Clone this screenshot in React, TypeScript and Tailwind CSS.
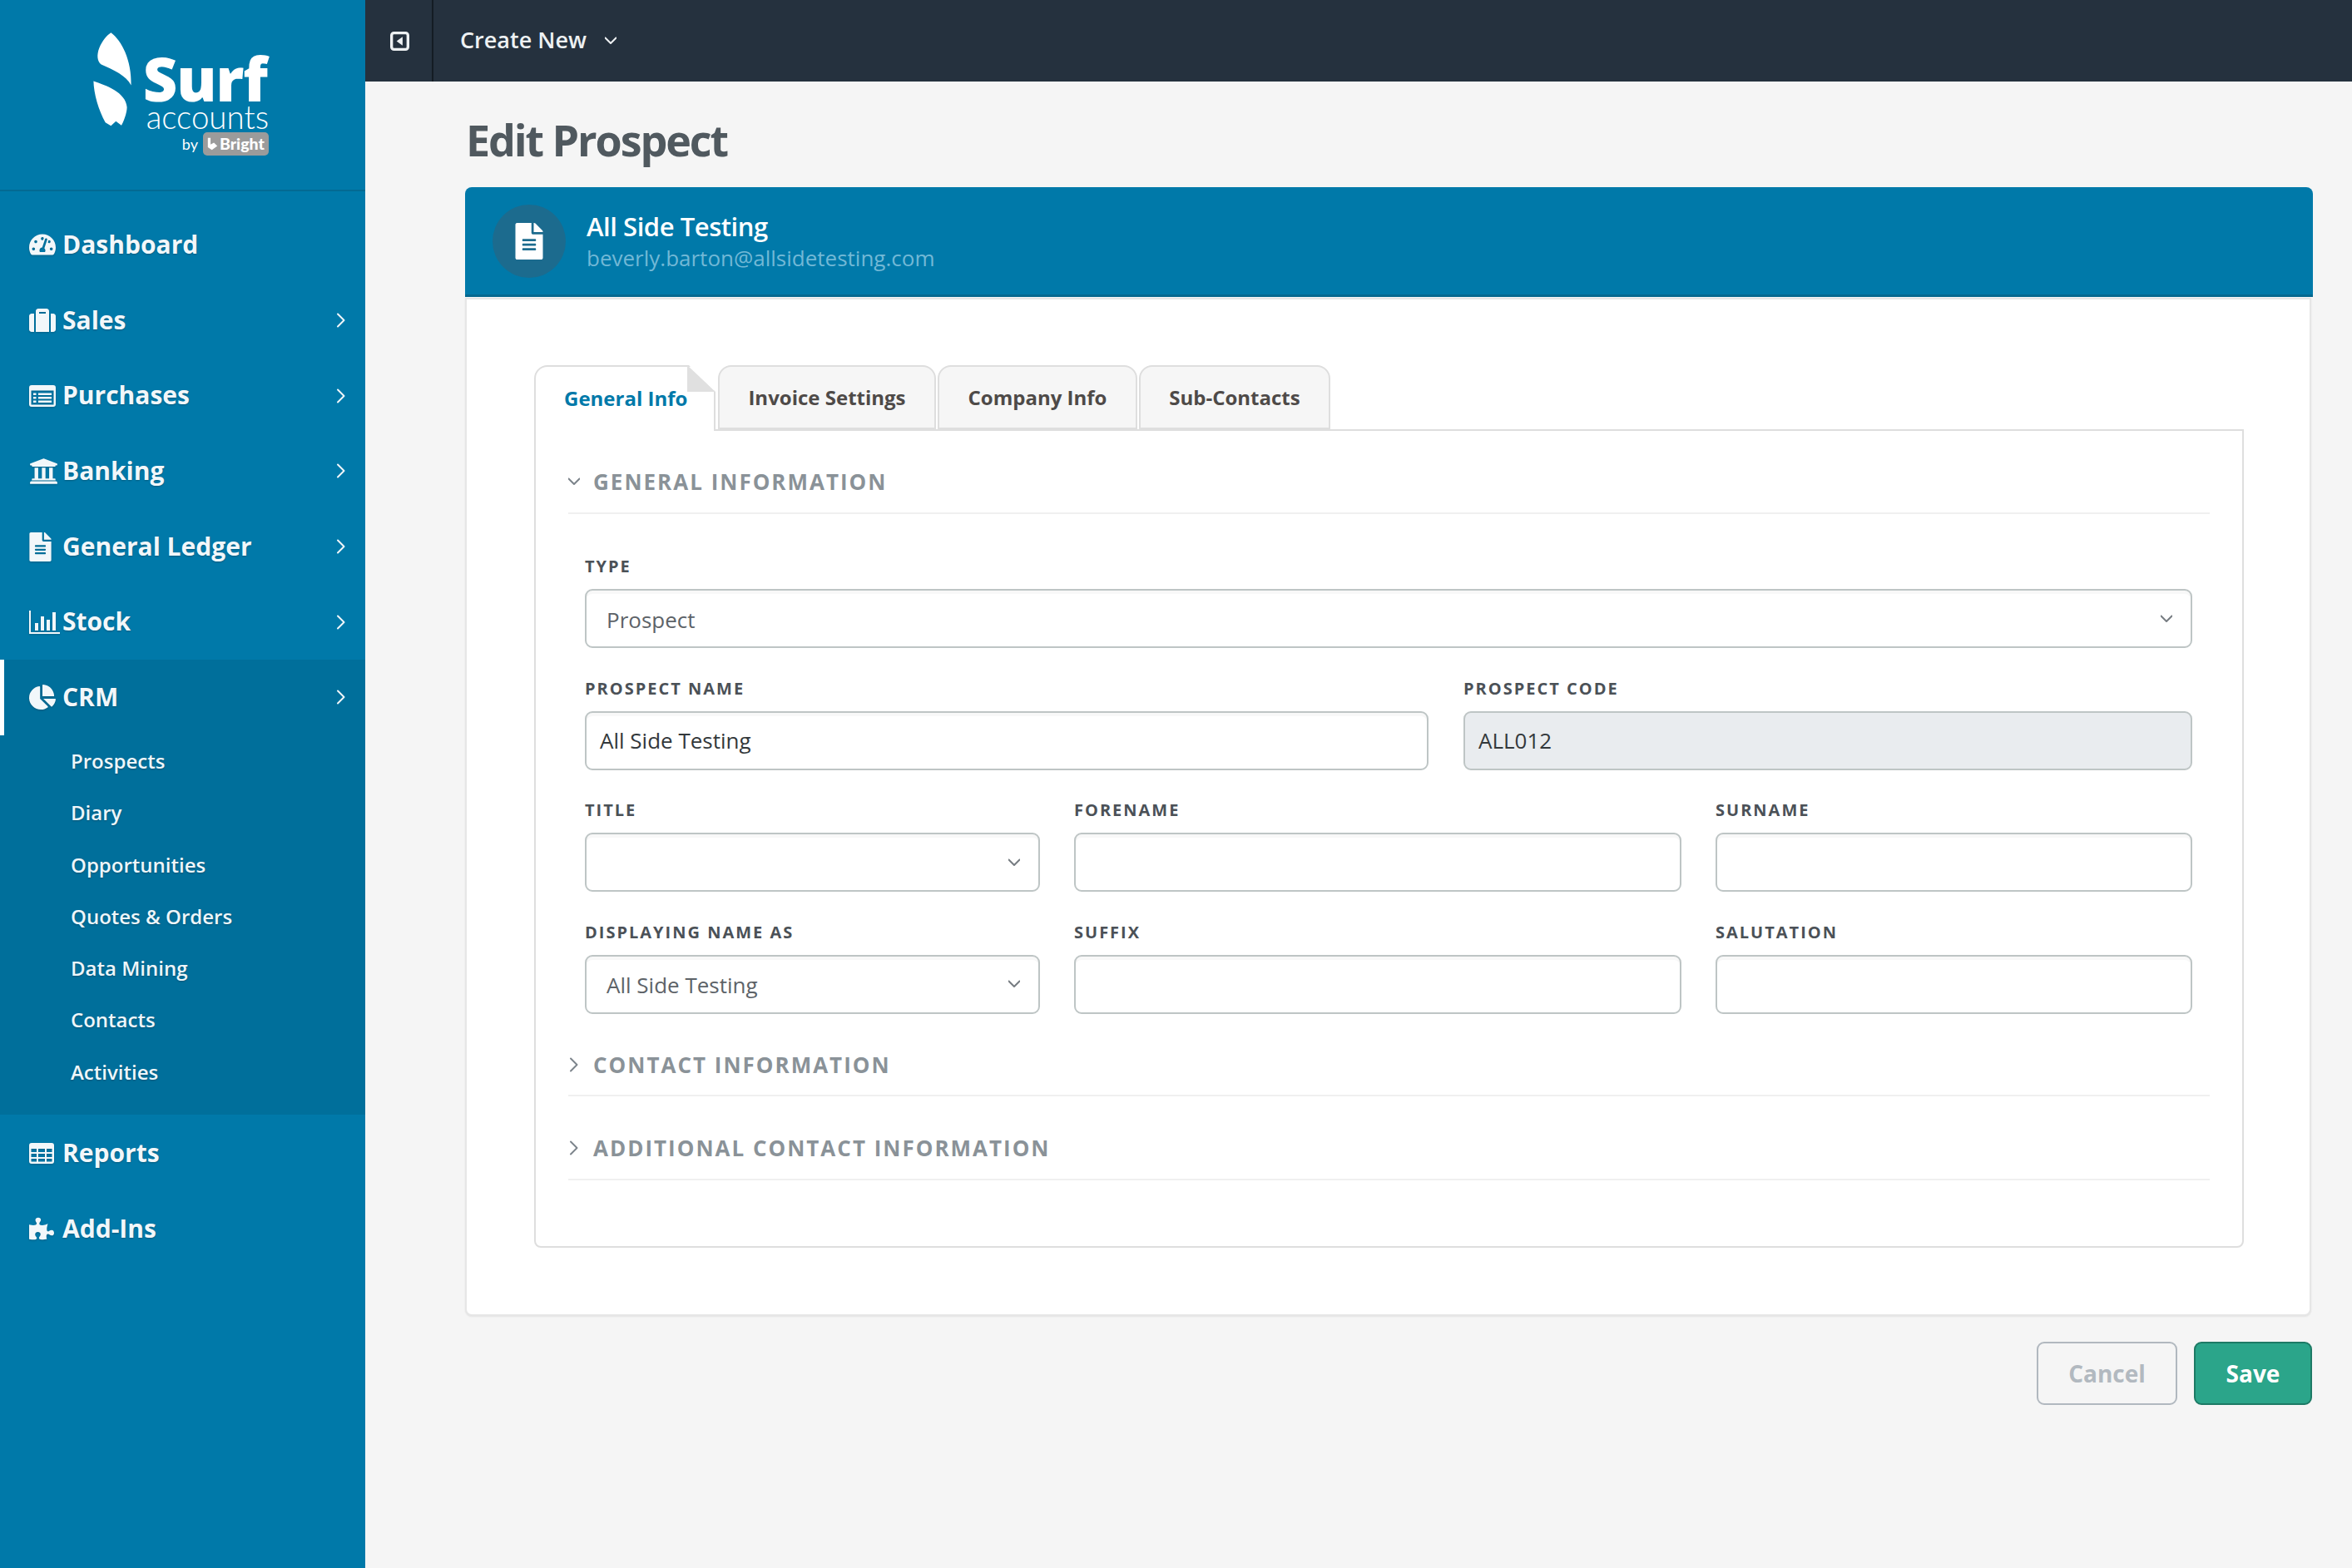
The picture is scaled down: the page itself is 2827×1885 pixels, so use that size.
import React from "react";
import {
  FaTachometerAlt,
  FaSuitcase,
  FaUniversity,
  FaFileAlt,
  FaChartPie,
  FaPuzzlePiece,
} from "react-icons/fa";

const Chev = ({ dir, className }: { dir: "right" | "down"; className: string }) => (
  <svg viewBox="0 0 14 18" className={className} fill="none" stroke="currentColor" strokeWidth="2" strokeLinecap="round" strokeLinejoin="round">
    {dir === "right" ? <path d="M3 1.5 10.5 9 3 16.5" /> : <path d="M0.5 5.5 7 12l6.5-6.5" />}
  </svg>
);

const StockIcon = ({ className }: { className: string }) => (
  <svg viewBox="0 0 37 28" className={className} fill="currentColor">
    <rect x="0" y="0" width="2" height="28" />
    <rect x="0" y="26" width="37" height="2" />
    <rect x="7" y="15" width="4" height="9" />
    <rect x="14" y="7" width="4" height="17" />
    <rect x="21" y="11" width="4" height="13" />
    <rect x="28" y="2" width="4" height="22" />
  </svg>
);

const TableIcon = ({ className }: { className: string }) => (
  <svg viewBox="0 0 30 25" className={className} fill="currentColor" fillRule="evenodd">
    <path d="M3 0H27A3 3 0 0 1 30 3V22A3 3 0 0 1 27 25H3A3 3 0 0 1 0 22V3A3 3 0 0 1 3 0ZM2.5 7V11H9V7ZM11 7V11H19V7ZM21 7V11H27.5V7ZM2.5 13V17H9V13ZM11 13V17H19V13ZM21 13V17H27.5V13ZM2.5 19V22.5H9V19ZM11 19V22.5H19V19ZM21 19V22.5H27.5V19Z" />
  </svg>
);

const ListIcon = ({ className }: { className: string }) => (
  <svg viewBox="0 0 32 26" className={className} fill="currentColor" fillRule="evenodd">
    <path d="M3 0H29A3 3 0 0 1 32 3V23A3 3 0 0 1 29 26H3A3 3 0 0 1 0 23V3A3 3 0 0 1 3 0ZM2.5 6.5V23.5H29.5V6.5ZM5 9.5H8.5V12H5ZM11 9.5H27V12H11ZM5 14H8.5V16.5H5ZM11 14H27V16.5H11ZM5 18.5H8.5V21H5ZM11 18.5H27V21H11Z" />
  </svg>
);

const ToggleIcon = ({ className }: { className: string }) => (
  <svg viewBox="0 0 24 24" className={className} fill="currentColor">
    <rect x="1.75" y="1.75" width="20.5" height="20.5" rx="3" fill="none" stroke="currentColor" strokeWidth="3.5" />
    <path d="M15.5 6.5V17.5L8 12Z" />
  </svg>
);

const Logo = () => (
  <div className="h-[230px] border-b-2 border-[#046a93] flex items-start pl-[110px] pt-[36px] gap-[14px]">
    <svg viewBox="90 50 150 355" className="w-[50px] h-[118px] shrink-0" fill="#ffffff">
      <path d="M160 60C200 90 235 160 233 250C215 215 170 195 125 175C110 165 108 140 118 115C128 90 145 70 160 60Z" />
      <path d="M97 235C140 250 215 275 218 330C218 350 205 385 198 395L178 380L160 397L140 385C115 340 98 280 97 235Z" />
    </svg>
    <div className="flex flex-col items-end w-[149px] text-white">
      <div className="font-extrabold text-[72px] leading-[60px] mt-[28px] mr-[2px] tracking-[-1px] whitespace-nowrap">Surf</div>
      <div className="font-['Lato','Open_Sans',sans-serif] font-light text-[38.5px] leading-[28px] mt-[2px] whitespace-nowrap">accounts</div>
      <div className="flex items-center gap-[6px] mt-[5px]">
        <span className="font-['Lato','Open_Sans',sans-serif] text-[18px] leading-[22px]">by</span>
        <span className="flex items-center gap-[2px] bg-[#9b9b9b] rounded-[5px] h-[28px] w-[79px] pl-[5px]">
          <svg viewBox="0 0 16 20" className="w-[13px] h-[18px]" fill="#ffffff">
            <path d="M1 1h4v10l5-3 5 5-8 6-6-4z" />
          </svg>
          <span className="font-['Lato',sans-serif] font-black text-[19.5px] leading-[22px]">Bright</span>
        </span>
      </div>
    </div>
  </div>
);

const navTop = [
  { label: "Dashboard", icon: <FaTachometerAlt className="w-[32px] h-[32px]" /> },
  { label: "Sales", icon: <FaSuitcase className="w-[32px] h-[32px]" />, arrow: true },
  { label: "Purchases", icon: <ListIcon className="w-[32px] h-[26px]" />, arrow: true },
  { label: "Banking", icon: <FaUniversity className="w-[35px] h-[35px]" />, arrow: true },
  { label: "General Ledger", icon: <FaFileAlt className="w-[27px] h-[35px]" />, arrow: true },
  { label: "Stock", icon: <StockIcon className="w-[37px] h-[28px]" />, arrow: true },
];

const NavRow = ({ label, icon, arrow, active }: { label: string; icon: React.ReactNode; arrow?: boolean; active?: boolean }) => (
  <div className={`h-[90.7px] flex items-center pr-[22px] text-[#f2f7fa] ${active ? "border-l-[5px] border-white pl-[30px]" : "pl-[35px]"}`}>
    <span className="w-[40px] shrink-0 flex items-center [filter:drop-shadow(0_1px_1px_rgba(0,0,0,0.2))]">{icon}</span>
    <span className="flex-1 text-[30px] font-bold leading-none pb-[1px] [text-shadow:0_1px_2px_rgba(0,0,0,0.25)]">{label}</span>
    {arrow && <Chev dir="right" className="w-[14px] h-[18px]" />}
  </div>
);

const Sidebar = () => (
  <aside className="w-[439px] shrink-0 bg-[#0079a9] h-full">
    <Logo />
    <nav className="mt-[19px]">
      {navTop.map((n) => (
        <NavRow key={n.label} {...n} />
      ))}
      <div className="bg-[#006f9b] h-[547px]">
        <NavRow active arrow label="CRM" icon={<FaChartPie className="w-[32px] h-[32px]" />} />
        <div>
          {["Prospects", "Diary", "Opportunities", "Quotes & Orders", "Data Mining", "Contacts", "Activities"].map((s) => (
            <div key={s} className="h-[62.3px] flex items-center pl-[85px] text-[24px] font-semibold text-[#eef6fa] [text-shadow:0_1px_2px_rgba(0,0,0,0.25)]">
              {s}
            </div>
          ))}
        </div>
      </div>
      <div className="mt-[1px]">
        <NavRow label="Reports" icon={<TableIcon className="w-[30px] h-[25px]" />} />
        <NavRow label="Add-Ins" icon={<FaPuzzlePiece className="w-[30px] h-[30px]" />} />
      </div>
    </nav>
  </aside>
);

const Label = ({ children }: { children: React.ReactNode }) => (
  <div className="h-[24px] mb-[15px] text-[20px] leading-[24px] font-bold tracking-[2px] uppercase text-[#4b5157]">{children}</div>
);

const fieldBox = "h-[71px] rounded-[9px] border-2 border-[#bec5c5] flex items-center text-[26px] shadow-[inset_0_4px_0_#f8f8f8]";

const Input = ({ label, value, disabled }: { label: string; value?: string; disabled?: boolean }) => (
  <div>
    <Label>{label}</Label>
    <div className={`${fieldBox} pl-[16px] text-[#33383b] ${disabled ? "bg-[#e9ecef] !shadow-none" : "bg-white"}`}>{value}</div>
  </div>
);

const Select = ({ label, value }: { label: string; value?: string }) => (
  <div>
    <Label>{label}</Label>
    <div className={`${fieldBox} pl-[24px] pr-[22px] bg-white text-[#5d6368] justify-between`}>
      <span className="pt-[3px]">{value}</span>
      <Chev dir="down" className="w-[14px] h-[18px] text-[#777d82]" />
    </div>
  </div>
);

const Section = ({ title, open, className }: { title: string; open?: boolean; className: string }) => (
  <div className={`flex items-center border-b-2 border-[#f0f0f0] ${className}`}>
    <span className="w-[30px] shrink-0 text-[#7c848b]">
      <Chev dir={open ? "down" : "right"} className="w-[14px] h-[18px]" />
    </span>
    <span className="text-[26px] leading-[34px] font-bold tracking-[2px] uppercase text-[#8a9298]">{title}</span>
  </div>
);

const Tab = ({ label, className }: { label: string; className: string }) => (
  <div className={`h-[77px] bg-[#f6f6f6] border-2 border-[#dedede] rounded-t-[16px] flex items-center justify-center text-[24px] font-bold text-[#4e4a48] ${className}`}>
    {label}
  </div>
);

export default function App() {
  return (
    <div className="flex w-[2827px] h-[1885px] overflow-hidden bg-[#f5f5f5] font-['Open_Sans',sans-serif]">
      <Sidebar />
      <div className="flex-1 min-w-0">
        <header className="h-[98px] bg-[#25313e] flex items-center text-[#eef1f3]">
          <div className="w-[82px] h-full flex items-center justify-center border-r-2 border-[#141c24]">
            <ToggleIcon className="w-[23px] h-[23px] ml-[2px]" />
          </div>
          <span className="ml-[32px] text-[27px] font-semibold pb-[1px]">Create New</span>
          <Chev dir="down" className="ml-[22px] w-[14px] h-[18px]" />
        </header>

        <main className="pl-[120px] pr-[47px]">
          <h1 className="h-[127px] pt-[12px] ml-[1px] flex items-center text-[52px] font-bold tracking-[-2.1px] text-[#50595f]">Edit Prospect</h1>

          <div className="h-[132px] bg-[#0079a9] rounded-t-[8px] border-b-[3px] border-[#05688f] flex items-center pl-[33px]">
            <div className="w-[88px] h-[88px] rounded-full bg-[#1c6b8e] flex items-center justify-center">
              <FaFileAlt className="w-[38px] h-[44px] text-white" />
            </div>
            <div className="ml-[25px]">
              <div className="text-[31px] leading-[40px] font-semibold tracking-[-0.45px] text-white">All Side Testing</div>
              <div className="text-[26px] leading-[36px] text-[#72b8d6]">beverly.barton@allsidetesting.com</div>
            </div>
          </div>

          <div className="mr-[2px] h-[1224px] mt-px bg-white border-2 border-[#e6e6e6] rounded-b-[8px] shadow-[0_1px_2px_rgba(0,0,0,0.08)] pl-[81px] pr-[79px] pt-[79px]">
            <div className="flex gap-[3px] relative z-10">
              <div className="relative h-[79px] w-[218px] -mb-[2px] bg-white border-t-2 border-l-2 border-r-2 border-[#dedede] rounded-tl-[16px] flex items-center pl-[34px] pb-[2px] text-[24px] font-bold text-[#0079a9]">
                General Info
                <svg viewBox="0 0 34 32" className="absolute -top-[2px] -right-[2px] w-[34px] h-[32px]">
                  <path d="M0 0L34 32H0Z" fill="#e0e0e0" />
                  <path d="M2 0L34 0V32Z" fill="#ffffff" />
                </svg>
              </div>
              <Tab label="Invoice Settings" className="w-[262px]" />
              <Tab label="Company Info" className="w-[240px] -ml-[1px]" />
              <Tab label="Sub-Contacts" className="w-[230px] -ml-[1px]" />
            </div>

            <div className="h-[984px] border-2 border-[#dedede] rounded-b-[8px] px-[39px]">
              <Section title="General Information" open className="h-[100px] pt-[24px]" />
              <div className="pl-[20px] pr-[21px] mt-[51px] flex flex-col gap-y-[36.5px]">
                <Select label="Type" value="Prospect" />
                <div className="grid grid-cols-[1014px_1fr] gap-x-[42px]">
                  <Input label="Prospect Name" value="All Side Testing" />
                  <Input label="Prospect Code" value="ALL012" disabled />
                </div>
                <div className="grid grid-cols-[547px_730px_1fr] gap-x-[41px]">
                  <Select label="Title" />
                  <Input label="Forename" />
                  <Input label="Surname" />
                </div>
                <div className="grid grid-cols-[547px_730px_1fr] gap-x-[41px]">
                  <Select label="Displaying Name As" value="All Side Testing" />
                  <Input label="Suffix" />
                  <Input label="Salutation" />
                </div>
              </div>
              <Section title="Contact Information" className="h-[99px] pt-[25px]" />
              <Section title="Additional Contact Information" className="h-[101px] pt-[25px]" />
            </div>
          </div>

          <div className="flex justify-end gap-[20px] mt-[31px] mr-[1px]">
            <div className="w-[169px] h-[76px] rounded-[9px] border-2 border-[#b1b8bf] flex items-center justify-center text-[28px] font-bold text-[#b2b9c0]">Cancel</div>
            <div className="w-[142px] h-[76px] rounded-[9px] border-2 border-[#1d7a65] bg-[#2ba58a] flex items-center justify-center text-[28px] font-bold text-white">Save</div>
          </div>
        </main>
      </div>
    </div>
  );
}
